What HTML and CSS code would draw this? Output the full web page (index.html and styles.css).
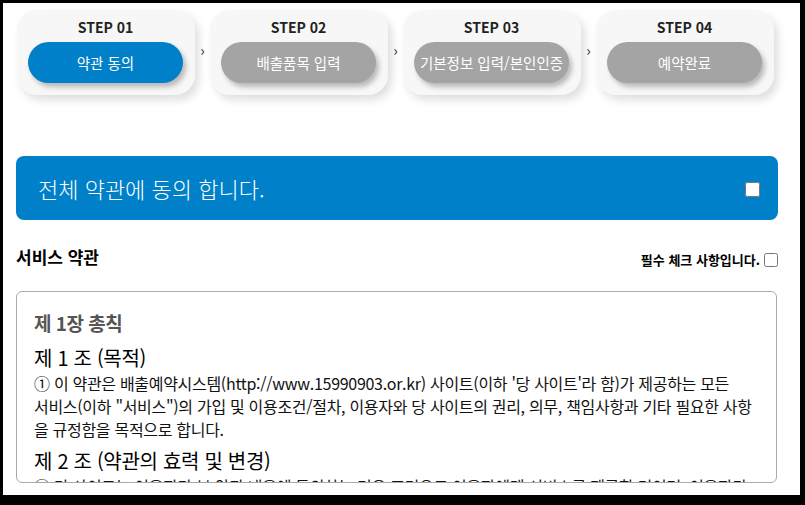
FILE: index.html
```html
<!DOCTYPE html>
<html lang="ko">
<head>
  <meta charset="UTF-8" />
  <meta name="viewport" content="width=device-width, initial-scale=1.0" />
  <title>약관 동의</title>
  <link rel="stylesheet" href="styles.css">
</head>
<body>
  <div class="frame">
    <div class="steps">
      <div class="step">
        <div class="step-label">STEP 01</div>
        <div class="step-pill active">약관 동의</div>
      </div>
      <div class="step-arrow">&rsaquo;</div>
      <div class="step">
        <div class="step-label">STEP 02</div>
        <div class="step-pill">배출품목 입력</div>
      </div>
      <div class="step-arrow">&rsaquo;</div>
      <div class="step">
        <div class="step-label">STEP 03</div>
        <div class="step-pill">기본정보 입력/본인인증</div>
      </div>
      <div class="step-arrow">&rsaquo;</div>
      <div class="step">
        <div class="step-label">STEP 04</div>
        <div class="step-pill">예약완료</div>
      </div>
    </div>

    <label class="agree-all">
      <span>전체 약관에 동의 합니다.</span>
      <input type="checkbox" id="agree-all" />
    </label>

    <div class="terms-head">
      <h2>서비스 약관</h2>
      <label class="required-check">필수 체크 사항입니다. <input type="checkbox" id="agree-service" /></label>
    </div>

    <div class="terms-box">
      <h3>제 1장 총칙</h3>
      <h4>제 1 조 (목적)</h4>
      <p>① 이 약관은 배출예약시스템(http://www.15990903.or.kr) 사이트(이하 '당 사이트'라 함)가 제공하는 모든 <span class="nowrap">서비스(이하</span> "서비스")의 가입 및 이용조건/절차, 이용자와 당 사이트의 권리, 의무, 책임사항과 기타 필요한 사항을 규정함을 목적으로 합니다.</p>
      <h4>제 2 조 (약관의 효력 및 변경)</h4>
      <p>① 당 사이트는 이용자가 본 약관 내용에 동의하는 경우 조건으로 이용자에게 서비스를 제공할 것이며, 이용자가 본 약관의 내용에 동의하는 경우, 당 사이트의 서비스 제공 행위 및 이용자의 서비스 사용 행위에는 본 약관이 우선적으로 적용됩니다.</p>
    </div>
  </div>
</body>
</html>
```

FILE: styles.css
```css
body {
  margin: 0;
  background: #000;
  font-family: "Noto Sans CJK KR", "Noto Sans", sans-serif;
}

.frame {
  margin: 3px 5px 0 3px;
  height: 492px;
  overflow: hidden;
  background: #fff;
  padding: 7px 0 0 14px;
  box-sizing: border-box;
}

.steps {
  display: flex;
  align-items: center;
}

.step {
  width: 178px;
  height: 85px;
  box-sizing: border-box;
  padding: 6px 12px 0 11px;
  background: #f7f7f7;
  border-radius: 20px;
  box-shadow: 4px 5px 8px rgba(0,0,0,0.13);
  text-align: center;
}

.step-label {
  font-size: 14px;
  font-weight: bold;
  line-height: 22px;
  color: #222;
}

.step-pill {
  margin-top: 4px;
  height: 41px;
  line-height: 41px;
  border-radius: 21px;
  background: #a4a4a4;
  color: #fff;
  font-size: 14.5px;
  box-shadow: 3px 4px 5px rgba(0,0,0,0.25);
}

.step-pill.active {
  background: #0080c8;
}

.step-arrow {
  width: 15px;
  text-align: center;
  font-size: 15px;
  color: #333;
  margin-top: -6px;
}

.agree-all {
  display: flex;
  align-items: center;
  justify-content: space-between;
  margin: 61px 22px 0 -1px;
  height: 64px;
  padding: 0 18px 0 22px;
  background: #0080c8;
  border-radius: 8px;
  color: #fff;
  font-size: 22px;
  font-weight: 300;
}

.agree-all input {
  width: 15px;
  height: 15px;
  margin: 2px 0 0;
}

.terms-head {
  display: flex;
  justify-content: space-between;
  align-items: flex-end;
  margin: 25px 22px 0 -1px;
}

.terms-head h2 {
  margin: 0;
  font-size: 17px;
  line-height: 24px;
  font-weight: bold;
}

.required-check {
  display: flex;
  align-items: center;
  gap: 4px;
  font-size: 13px;
  font-weight: bold;
  line-height: 18px;
}

.required-check input {
  width: 14px;
  height: 14px;
  margin: 0;
}

.terms-box {
  margin: 22px 23px 0 -1px;
  height: 192px;
  box-sizing: border-box;
  overflow: hidden;
  border: 1px solid #aaa;
  border-radius: 6px;
  padding: 18px 18px 0 17px;
}

.terms-box h3 {
  margin: 0 0 8px;
  font-size: 19px;
  line-height: 26px;
  color: #555;
  font-weight: bold;
  letter-spacing: -0.5px;
}

.terms-box h4 {
  margin: 0;
  font-size: 20px;
  line-height: 28px;
  font-weight: normal;
  letter-spacing: -0.3px;
}

.terms-box p {
  margin: 0 0 6px;
  font-size: 16px;
  line-height: 23px;
  letter-spacing: -0.3px;
  color: #111;
}

.nowrap {
  white-space: nowrap;
}
```
